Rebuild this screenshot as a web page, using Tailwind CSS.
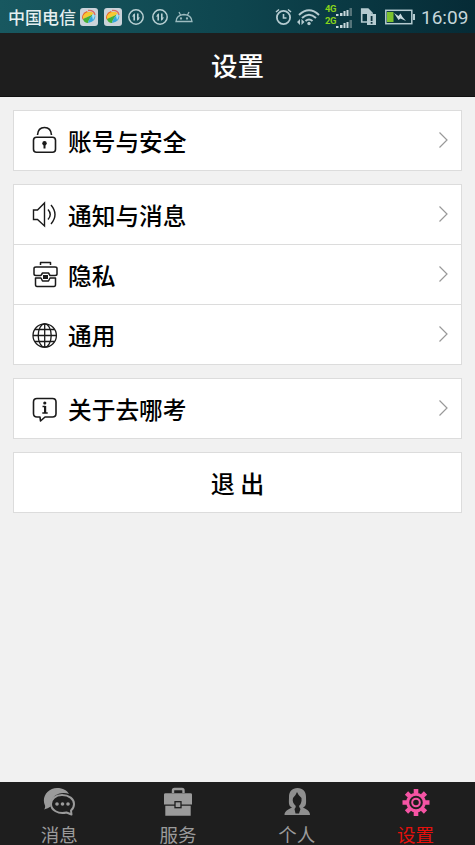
<!DOCTYPE html>
<html lang="zh-CN">
<head>
<meta charset="utf-8">
<title>设置</title>
<script src="https://cdn.jsdelivr.net/npm/@tailwindcss/browser@4"></script>
</head>
<body class="bg-[#f1f1f1]">
<div class="w-[475px] h-[845px] flex flex-col overflow-hidden bg-[#f1f1f1] text-black font-['Noto_Sans_CJK_SC',sans-serif]">

  <!-- Status bar -->
  <div class="h-[33px] shrink-0 flex items-center pl-2 pr-[7px] bg-linear-to-r from-[#185860] via-[#0e454e] to-[#062b36] text-[#e4eff0]">
    <span class="w-[72px] text-[17px] leading-[33px] whitespace-nowrap font-medium">中国电信</span>
    <svg class="w-[18px] h-[18px] mr-[6px]" viewBox="0 0 18 18"><rect width="18" height="18" rx="3" fill="#cbd3da"/><path d="M2 10Q2 5 7 3L9 6 3 12Z" fill="#e8622d"/><path d="M3 8Q6 3 12 4L14 6 3 11Z" fill="#f6c832"/><path d="M3 11L14 6Q9 10 8 15 4 15 3 11Z" fill="#45b035"/><path d="M15 6Q17 13 8 15 9 9 15 6Z" fill="#35a7dd"/><path d="M12 6.500L15 6Q15 9 13 12 12 9 12 6.500Z" fill="#a9e0f4"/><path d="M8 2.500Q14 2 15 7" fill="none" stroke="#dc6a62" stroke-width="1.300"/></svg>
    <svg class="w-[18px] h-[18px] mr-[6px]" viewBox="0 0 18 18"><rect width="18" height="18" rx="3" fill="#cbd3da"/><path d="M2 10Q2 5 7 3L9 6 3 12Z" fill="#e8622d"/><path d="M3 8Q6 3 12 4L14 6 3 11Z" fill="#f6c832"/><path d="M3 11L14 6Q9 10 8 15 4 15 3 11Z" fill="#45b035"/><path d="M15 6Q17 13 8 15 9 9 15 6Z" fill="#35a7dd"/><path d="M12 6.500L15 6Q15 9 13 12 12 9 12 6.500Z" fill="#a9e0f4"/><path d="M8 2.500Q14 2 15 7" fill="none" stroke="#dc6a62" stroke-width="1.300"/></svg>
    <svg class="w-4 h-4 mr-2" viewBox="0 0 16 16" fill="none" stroke="#b9d0d3" stroke-width="1.5"><circle cx="8" cy="8" r="7.2"/><path d="M6.2 11.5V5M9.8 4.500V11" stroke-width="1.600"/><path d="M3.800 7.500L7 4V7.500ZM12.200 8.500L9 12V8.500Z" fill="#b9d0d3" stroke="none"/></svg>
    <svg class="w-4 h-4 mr-[7px]" viewBox="0 0 16 16" fill="none" stroke="#b9d0d3" stroke-width="1.5"><circle cx="8" cy="8" r="7.2"/><path d="M6.2 11.5V5M9.8 4.500V11" stroke-width="1.600"/><path d="M3.800 7.500L7 4V7.500ZM12.200 8.500L9 12V8.500Z" fill="#b9d0d3" stroke="none"/></svg>
    <svg class="w-[18px] h-3" viewBox="0 0 18 12" fill="none" stroke="#9dbcc0" stroke-width="1.3"><path d="M1 10.500Q1.500 4 9 3.500 16.500 4 17 10.500ZM5.500 4L4 1M12.500 4L14 1"/><circle cx="6" cy="7.500" r=".5"/><circle cx="12" cy="7.500" r=".5"/></svg>

    <svg class="w-[17px] h-[18px] ml-auto mr-[5px]" viewBox="0 0 17 18" fill="none" stroke="#b5cbd0" stroke-width="1.8"><circle cx="8.500" cy="9.500" r="6.600"/><path d="M8.500 6V10H11.500M1 4L4 1.500M16 4L13 1.500" stroke-width="1.600"/></svg>
    <svg class="w-[23px] h-[18px] mr-[5px]" viewBox="0 0 23 18" fill="none" stroke="#b5cbd0" stroke-width="2"><path d="M2 7Q12 -2.500 22 7M5 10Q12 3.500 19 10M8.500 13Q12 10 15.500 13"/><circle cx="12" cy="15.500" r="1.700" fill="#b5cbd0" stroke="none"/><path d="M0 14L3 11V17ZM7.500 14L4.500 11V17Z" fill="#b5cbd0" stroke="none"/></svg>
    <div class="w-[27px] mr-2 flex flex-col gap-[2px]">
      <div class="flex items-end h-[10px]"><span class="w-[11px] text-[9.500px] leading-[8px] pb-[3px] font-bold text-[#86d31c] font-['Roboto',sans-serif] tracking-[-0.5px]">4G</span><svg class="w-[16px] h-2" viewBox="0 0 16 8"><path d="M0 6H2.500V8H0ZM4 5H6.500V8H4ZM7.500 3H9.500V8H7.500ZM10.500 2H12.500V8H10.500Z" fill="#c8dade"/><path d="M13.500 0H16V8H13.500Z" fill="#55747a"/></svg></div>
      <div class="flex items-end h-[10px]"><span class="w-[11px] text-[9.500px] leading-[8px] pb-[3px] font-bold text-[#86d31c] font-['Roboto',sans-serif] tracking-[-0.5px]">2G</span><svg class="w-[16px] h-2" viewBox="0 0 16 8"><path d="M0 6H2.500V8H0ZM4 5H6.500V8H4ZM7.500 3H9.500V8H7.500ZM10.500 2H12.500V8H10.500Z" fill="#c8dade"/><path d="M13.500 0H16V8H13.500Z" fill="#55747a"/></svg></div>
    </div>
    <svg class="w-4 h-[17px] mr-[9px]" viewBox="0 0 16 17"><path d="M1.700 1H8L12 5V14H1.700Z" fill="none" stroke="#b5cbd0" stroke-width="1.600"/><path d="M2 1H8L11 4V6H2Z" fill="#b5cbd0"/><path d="M7 6H16V17H7Z" fill="#b5cbd0"/><path d="M10.700 8H12.500V13H10.700ZM10.700 14H12.500V15.700H10.700Z" fill="#0a313b"/></svg>
    <svg class="w-[30px] h-4 mr-[6px]" viewBox="0 0 30 16"><rect x=".8" y="1.300" width="26" height="13.400" fill="none" stroke="#b5cbd0" stroke-width="1.500"/><path d="M28 5H30V11H28Z" fill="#b5cbd0"/><path d="M2 3H8.500V13H2Z" fill="#7cc22e"/><path d="M9 4L13.500 7 15.500 4.500 17.500 8 21 12 15.500 9.500 13.500 11Z" fill="#c8dade"/></svg>
    <span class="w-[47px] text-[19px] leading-[31px] pt-[2px] font-['Roboto',sans-serif] text-[#c5d6da]">16:09</span>
  </div>

  <!-- Title -->
  <header class="h-[64px] shrink-0 bg-[#1e1e1e] border-b border-[#111] flex items-center justify-center text-white text-[26.500px] font-medium leading-[64px]">设置</header>

  <main class="flex-1 flex flex-col gap-[13px] pt-[13px] pl-[13px] pr-[13px] text-[23.700px]">
    <section class="h-[61px] border border-[#dcdcdc] bg-white">
      <div class="h-[59px] flex items-center pl-[18px] pr-[12px] pb-[2px]">
        <svg class="w-[26px] h-[28px]" viewBox="0 0 26 28" fill="none" stroke="#1a1a1a" stroke-width="1.600"><rect x="1.500" y="11.300" width="22" height="15" rx="3"/><path d="M5.500 9Q6 1.500 12.500 1.500T19.500 9"/><circle cx="12.500" cy="17.300" r="2.200" fill="#1a1a1a" stroke="none"/><path d="M12.500 17V22.500" stroke-width="2"/></svg>
        <span class="ml-[10px] flex-1 font-medium pt-[3px] leading-[36px]">账号与安全</span>
        <svg class="w-[11px] h-[18px]" viewBox="0 0 11 18" fill="none" stroke="#999" stroke-width="1.200"><path d="M1.500 1.500L9 9 1.500 16.500"/></svg>
      </div>
    </section>

    <section class="h-[181px] border border-[#dcdcdc] bg-white">
      <div class="h-[60px] border-b border-[#dcdcdc] flex items-center pl-[18px] pr-[12px] pb-[2px]">
        <svg class="w-[26px] h-[28px]" viewBox="0 0 26 28" fill="none" stroke="#1a1a1a" stroke-width="1.400"><path d="M1.500 10H5.500L12.500 3V26L5.500 19.500H1.500ZM16 9.500Q20.500 14.500 16 19.500M19 5Q27 14.500 19 24"/></svg>
        <span class="ml-[10px] flex-1 font-medium pt-[3px] leading-[36px]">通知与消息</span>
        <svg class="w-[11px] h-[18px]" viewBox="0 0 11 18" fill="none" stroke="#999" stroke-width="1.200"><path d="M1.500 1.500L9 9 1.500 16.500"/></svg>
      </div>
      <div class="h-[60px] border-b border-[#dcdcdc] flex items-center pl-[18px] pr-[12px] pb-[2px]">
        <svg class="w-[26px] h-[28px]" viewBox="0 0 26 28" fill="none" stroke="#1a1a1a" stroke-width="1.500" stroke-linejoin="round"><path d="M8.500 5V2.500H18.500V5M9 15.500H4Q2 15.500 2 14V8.500Q2 7 4 7H23Q25 7 25 8.500V14Q25 15.500 23 15.500H18L16.500 13H10.500L9 15.500M9 18H3.500V24.500Q3.500 26.500 5 26.500H22Q23.500 26.500 23.500 24.500V18H18L16.500 21H10.500Z"/><path d="M11 15H16V19H11Z" fill="#1a1a1a" stroke="none"/></svg>
        <span class="ml-[10px] flex-1 font-medium pt-[3px] leading-[36px]">隐私</span>
        <svg class="w-[11px] h-[18px]" viewBox="0 0 11 18" fill="none" stroke="#999" stroke-width="1.200"><path d="M1.500 1.500L9 9 1.500 16.500"/></svg>
      </div>
      <div class="h-[59px] flex items-center pl-[18px] pr-[12px] pb-[2px]">
        <svg class="w-[26px] h-[28px]" viewBox="0 0 26 28" fill="none" stroke="#1a1a1a" stroke-width="1.300"><circle cx="12.700" cy="15.500" r="11.700"/><ellipse cx="12.700" cy="15.500" rx="6.500" ry="11.700"/><path d="M12.700 3.800V27.200M1 15.500H24.400M3 9.500H22.400M3 21.500H22.400"/></svg>
        <span class="ml-[10px] flex-1 font-medium pt-[3px] leading-[36px]">通用</span>
        <svg class="w-[11px] h-[18px]" viewBox="0 0 11 18" fill="none" stroke="#999" stroke-width="1.200"><path d="M1.500 1.500L9 9 1.500 16.500"/></svg>
      </div>
    </section>

    <section class="h-[61px] border border-[#dcdcdc] bg-white">
      <div class="h-[59px] flex items-center pl-[18px] pr-[12px] pb-[2px]">
        <svg class="w-[26px] h-[28px]" viewBox="0 0 26 28" fill="none" stroke="#1a1a1a" stroke-width="1.600" stroke-linejoin="round"><path d="M5 4.500H20.500Q24 4.500 24 8V19.500Q24 23 20.500 23H13L8.500 27 8 23H5Q1.500 23 1.500 19.500V8Q1.500 4.500 5 4.500Z"/><circle cx="12.800" cy="9" r="1.600" fill="#1a1a1a" stroke="none"/><path d="M10.500 12.500H13.300M10.300 19H15.700" stroke-width="1.500"/><path d="M13.100 12V19" stroke-width="2.200"/></svg>
        <span class="ml-[10px] flex-1 font-medium pt-[3px] leading-[36px]">关于去哪考</span>
        <svg class="w-[11px] h-[18px]" viewBox="0 0 11 18" fill="none" stroke="#999" stroke-width="1.200"><path d="M1.500 1.500L9 9 1.500 16.500"/></svg>
      </div>
    </section>

    <button class="h-[61px] border border-[#dcdcdc] bg-white text-center text-[24px] font-medium leading-[59px]">退 出</button>
  </main>

  <!-- Tab bar -->
  <nav class="h-[63px] shrink-0 bg-[#1e1e1e] grid grid-cols-4 text-[18.500px] text-[#9b9b9b]">
    <div class="flex flex-col items-center pt-[5px]">
      <svg class="w-[34px] h-[30px] shrink-0" viewBox="0 0 34 30"><path d="M2 22.500Q3.500 21 3 18.500C-1 10 6 1 15 1 21 1 25 3.500 27 7 18 4 9 9 8.500 17L8.700 19.500Q6 21.500 2 22.500Z" fill="#9b9b9b"/><path d="M20 8C27 8 32 12 32 17Q32 21 29 23.500L29.500 27.500 24.500 25.500C16 27.500 9 23 9 17 9 12 13.500 8 20 8Z" fill="#1e1e1e" stroke="#9b9b9b" stroke-width="2" stroke-linejoin="round"/><g fill="#9b9b9b"><circle cx="15" cy="17" r="1.800"/><circle cx="20.500" cy="17" r="1.800"/><circle cx="26" cy="17" r="1.800"/></g></svg>
      <span class="leading-[34px] whitespace-nowrap">消息</span>
    </div>
    <div class="flex flex-col items-center pt-[5px]">
      <svg class="w-[30px] h-[30px] shrink-0" viewBox="0 0 30 30"><path d="M10 6V3.500Q10 2 11.500 2H19Q20.500 2 20.500 3.500V6" fill="none" stroke="#9b9b9b" stroke-width="2.400"/><path d="M1 7.500Q1 6.300 2.500 6.300H27.500Q29 6.300 29 7.500V17.500H1ZM2.300 18.800H27.700V28.700H2.300Z" fill="#9b9b9b"/><rect x="12" y="14.700" width="6" height="6" fill="#9b9b9b" stroke="#1e1e1e" stroke-width="1.300"/></svg>
      <span class="leading-[34px] whitespace-nowrap">服务</span>
    </div>
    <div class="flex flex-col items-center pt-[5px]">
      <svg class="w-[28px] h-[30px] shrink-0" viewBox="0 0 28 30"><path d="M1.500 28C1.500 24 5 22.500 9 20.500 5 19 6 15 6 10 6 4.500 9 1 14.500 1S23 4.500 23 10C23 15 24 19 20 20.500 24 22.500 27 24 27 28Z" fill="#8f8f8f"/><path d="M14 5Q15 8 18.500 11C19 15 17.500 17.500 16 19Q16.500 21 17.500 22L16 26.500H12.500L11.500 22Q12.800 21 12.800 19C10.500 17 9 14 10 11Q13 8 14 5Z" fill="#1e1e1e"/></svg>
      <span class="leading-[34px] whitespace-nowrap">个人</span>
    </div>
    <div class="flex flex-col items-center pt-[5px] text-[#e6100c]">
      <svg class="w-[30px] h-[30px] shrink-0" viewBox="0 0 30 30" fill="none" stroke="#f554a4"><circle cx="15" cy="15.500" r="8.300" stroke-width="3"/><circle cx="15" cy="15.500" r="3.800" stroke-width="2"/><path stroke-width="4.600" d="M15 2V6.500M15 24.500V29M1.500 15.500H6M24 15.500H28.500M5.500 6L8.700 9.200M21.300 21.800L24.500 25M5.500 25L8.700 21.800M21.300 9.200L24.500 6"/></svg>
      <span class="leading-[34px] whitespace-nowrap">设置</span>
    </div>
  </nav>
</div>
</body>
</html>
